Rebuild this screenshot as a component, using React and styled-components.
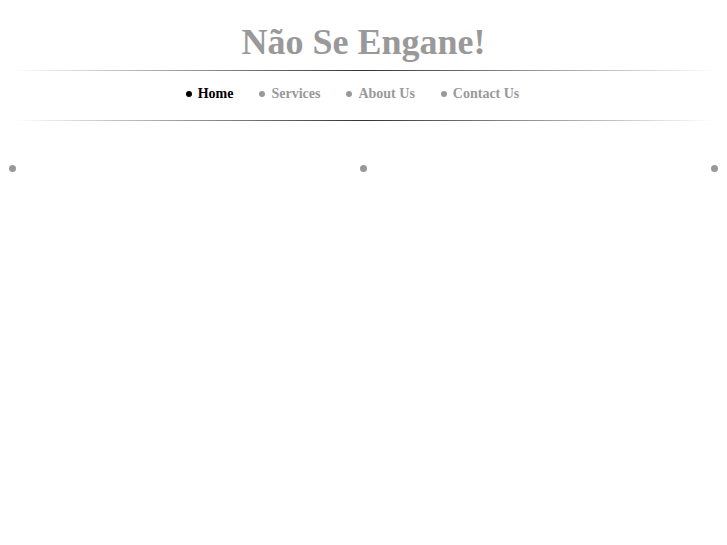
import React from 'react';
import styled, { createGlobalStyle } from 'styled-components';

const GlobalStyle = createGlobalStyle`
  html, body {
    margin: 0;
    padding: 0;
    background: #fff;
    font-family: "Liberation Serif", "Times New Roman", serif;
  }
`;

const Page = styled.div`
  width: 702px;
  margin: 0 auto;
  padding-top: 20px;
`;

const Title = styled.h1`
  margin: 0 0 6px;
  text-align: center;
  font-size: 36px;
  font-weight: bold;
  color: #999;
  line-height: 44px;
`;

const Rule = styled.div`
  height: 1px;
  background: linear-gradient(to right, rgba(0,0,0,0) 0%, #333 50%, rgba(0,0,0,0) 100%);
`;

const Nav = styled.ul`
  list-style: none;
  margin: 0;
  padding: 14px 22px 17px 0;
  display: flex;
  justify-content: center;
  gap: 26px;
`;

const NavItem = styled.li`
  display: flex;
  align-items: center;
  gap: 6px;
  font-size: 14px;
  font-weight: bold;
  line-height: 18px;
  color: ${p => (p.active ? '#000' : '#999')};

  &::before {
    content: '';
    width: 6px;
    height: 6px;
    border-radius: 50%;
    background: currentColor;
  }
`;

const Columns = styled.div`
  display: flex;
  justify-content: space-between;
  padding-top: 44px;
  margin: 0 -3px 0 -4px;
`;

const Column = styled.div`
  width: 7px;
  height: 7px;
  border-radius: 50%;
  background: #999;
`;

export default function App() {
  return (
    <>
      <GlobalStyle />
      <Page>
        <Title>Não Se Engane!</Title>
        <Rule />
        <Nav>
          <NavItem active>Home</NavItem>
          <NavItem>Services</NavItem>
          <NavItem>About Us</NavItem>
          <NavItem>Contact Us</NavItem>
        </Nav>
        <Rule />
        <Columns>
          <Column />
          <Column />
          <Column />
        </Columns>
      </Page>
    </>
  );
}
